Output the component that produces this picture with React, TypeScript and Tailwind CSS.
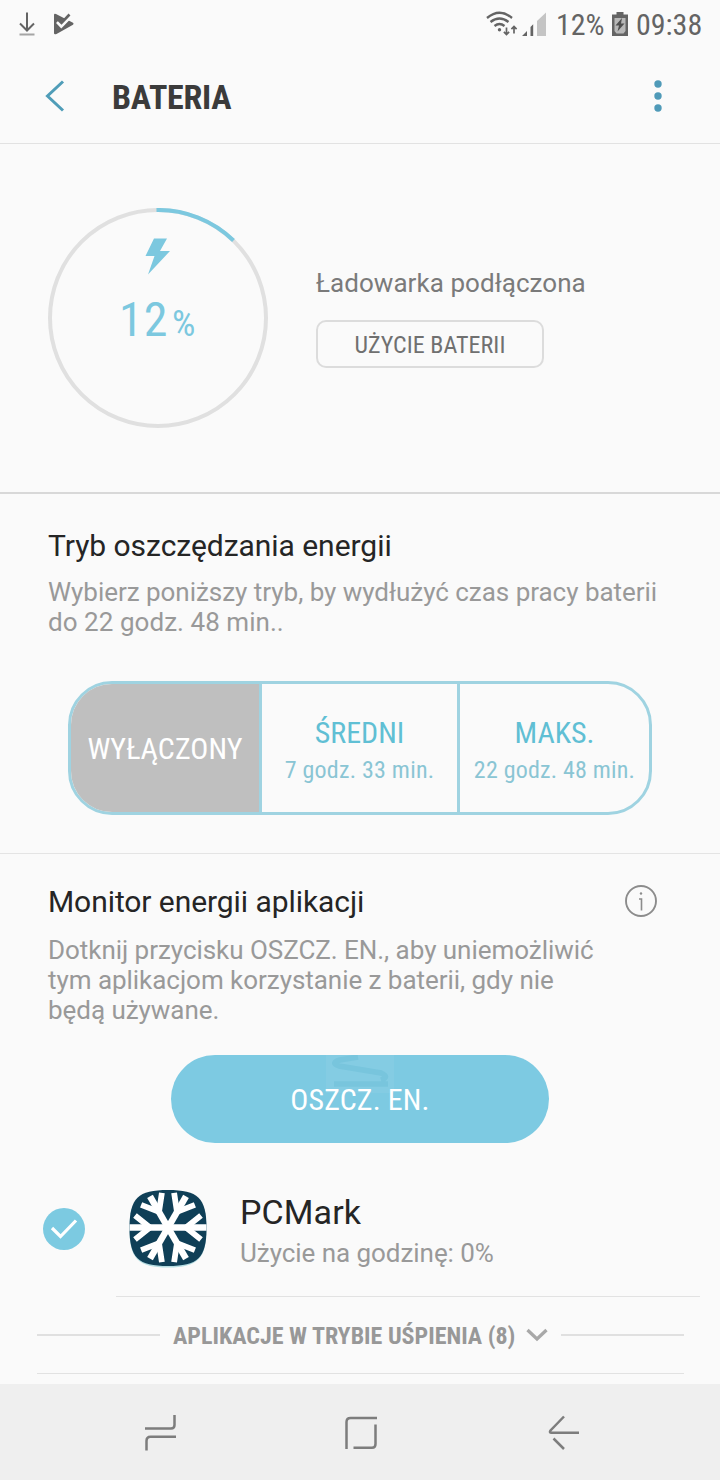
import React from "react";

const COND = "font-['Roboto_Condensed','Roboto',sans-serif] [font-stretch:75%] whitespace-nowrap";

function StatusBar() {
  return (
    <div className="flex h-12 items-center pl-[18px] pr-[17px] text-[#646464]">
      <svg width="18" height="26" viewBox="0 0 18 26" fill="none" stroke="#646464" strokeWidth="2">
        <path d="M9 1.500v18M2 12.500l7 7 7-7" />
        <path d="M1.500 23.500h15" stroke="#a5a5a5" strokeWidth="2" />
      </svg>
      <svg className="ml-[17px]" width="22" height="24" viewBox="0 0 22 24">
        <path d="M1 3Q1 1 3 2l17 8.800q1.200 1 0 2L3.500 22Q1 23 1 21z" fill="#646464" />
        <path d="M4.500 9.500l3.800 4L18 3.500" fill="none" stroke="#fafafa" strokeWidth="4" />
        <path d="M5.300 7.800l3.200 3.200L16.500 2.500" fill="none" stroke="#646464" strokeWidth="2.600" />
      </svg>
      <div className="ml-auto flex items-center">
        <svg width="62" height="30" viewBox="0 0 62 30" fill="none" stroke="#646464">
          <path d="M1 9Q13.500-1.500 26 9M4.500 13q9-7 18 0M8.500 17q5-4 10 0" strokeWidth="2.300" />
          <circle cx="13.500" cy="20.800" r="1.700" fill="#646464" stroke="none" />
          <path d="M20.500 18.500v7M17.900 22.800l2.600 2.700 2.600-2.700M28 24.500v-7M25.400 20.200l2.600-2.700 2.600 2.700" strokeWidth="1.700" />
          <path d="M36 27l5-5v5z M44.500 27V18l2.700-2.700V27z" fill="#646464" stroke="none" />
          <path d="M51 27V12l9-8.500V27z" fill="#c4c4c4" stroke="none" />
        </svg>
        <span className={`${COND} ml-2 mt-px w-[47px] text-[30px] leading-[30px]`}>12%</span>
        <svg className="ml-[9px]" width="16" height="24" viewBox="0 0 16 24">
          <path d="M0 2.500h4.500V0h7v2.500H16V24H0z" fill="#646464" />
          <path d="M2.500 6h11v13l-2 2.500h-7l-2-2.500z" fill="#b8b8b8" />
          <path d="M10 6L3.500 13.500h3.500L5.500 19.500 12.500 11.500H9z" fill="#4f4f4f" />
        </svg>
        <span className={`${COND} ml-[8px] mt-px w-[67px] text-[30px] leading-[30px]`}>09:38</span>
      </div>
    </div>
  );
}

function Header() {
  return (
    <header className="flex h-24 items-center border-b border-[#e2e2e2] pl-[45px] pr-[53px]">
      <svg width="20" height="32" viewBox="0 0 20 32" fill="none" stroke="#4f9db8" strokeWidth="3">
        <path d="M18 1.500L2.500 16 18 30.500" />
      </svg>
      <h1 className={`${COND} ml-[47px] mt-[2px] text-[34px] font-bold leading-[40px] tracking-[-0.25px] text-[#3b3b3b]`}>BATERIA</h1>
      <svg className="ml-auto" width="18" height="32" viewBox="0 0 18 32" fill="#4f9ab8">
        <circle cx="9" cy="4" r="3.700" />
        <circle cx="9" cy="16" r="3.700" />
        <circle cx="9" cy="28" r="3.700" />
      </svg>
    </header>
  );
}

function ChargeState() {
  return (
    <section className="flex h-[350px] items-start border-b-2 border-[#d8d8d8] pl-12 pt-16">
      <div className="grid h-[220px] w-[220px]">
        <svg className="col-start-1 row-start-1" width="220" height="220" viewBox="0 0 220 220" fill="none">
          <circle cx="110" cy="110" r="108" stroke="#e0e0e0" strokeWidth="4" />
          <path d="M108.500 2A108 108 0 0 1 185.500 32.500" stroke="#7cc8df" strokeWidth="4" />
          <path d="M106 30.500H119L112 43H122L100 66.500l6.500-18.500H97.500z" fill="#7cc8df" />
        </svg>
        <div className="col-start-1 row-start-1 flex items-baseline pl-[71px] pt-[84px] text-[#7cc8df]">
          <span className={`${COND} w-[53px] text-[48px] leading-[56px] tracking-[1px]`}>12</span>
          <span className={`${COND} text-[37px] leading-[40px]`}>%</span>
        </div>
      </div>
      <div className="ml-12 pt-[59px]">
        <p className="font-[Roboto] text-[26px] leading-8 tracking-[0.05px] text-[#7a7a7a]">Ładowarka podłączona</p>
        <button className="mt-[21px] flex h-12 w-[228px] items-center justify-center rounded-[10px] border-2 border-[#dcdcdc]">
          <span className={`${COND} mt-[2px] text-[24px] leading-7 tracking-[0.08px] text-[#707070]`}>UŻYCIE BATERII</span>
        </button>
      </div>
    </section>
  );
}

function PowerModes() {
  return (
    <section className="h-[360px] border-b border-[#e4e4e4] pt-8">
      <h2 className="pl-12 font-[Roboto] text-[30px] leading-10 tracking-[-0.04px] text-[#252525]">Tryb oszczędzania energii</h2>
      <p className="mt-[11px] whitespace-nowrap pl-12 font-[Roboto] text-[26px] leading-[30px] tracking-[-0.03px] text-[#999999]">
        Wybierz poniższy tryb, by wydłużyć czas pracy baterii
        <br />
        <span className="tracking-[0.05px]">do 22 godz. 48 min..</span>
      </p>
      <div className="ml-[68px] mt-11 flex h-[134px] w-[584px] overflow-hidden rounded-[44px] border-[3px] border-[#9fd3e1]">
        <div className="flex w-[188px] items-center justify-center bg-[#bfbfbf]">
          <span className={`${COND} mt-[2px] text-[30px] leading-9 tracking-[0.1px] text-white`}>WYŁĄCZONY</span>
        </div>
        <div className="flex w-[198px] flex-col items-center border-l-[3px] border-[#9fd3e1] pt-[31px]">
          <span className={`${COND} text-[30px] leading-9 text-[#60bfd4]`}>ŚREDNI</span>
          <span className={`${COND} mt-[5px] text-[24px] leading-7 tracking-[0.22px] text-[#8ac5d4]`}>7 godz. 33 min.</span>
        </div>
        <div className="flex flex-1 flex-col items-center border-l-[3px] border-[#9fd3e1] pt-[31px]">
          <span className={`${COND} text-[30px] leading-9 text-[#60bfd4]`}>MAKS.</span>
          <span className={`${COND} mt-[5px] text-[24px] leading-7 tracking-[0.2px] text-[#8ac5d4]`}>22 godz. 48 min.</span>
        </div>
      </div>
    </section>
  );
}

function SnowflakeIcon() {
  return (
    <svg width="80" height="80" viewBox="0 0 80 80">
      <defs>
        <clipPath id="tile">
          <path d="M40 2C70 2 78.500 10 78.500 40S70 78 40 78 1.500 70 1.500 40 10 2 40 2z" />
        </clipPath>
      </defs>
      <path d="M40 4C70 4 78.500 12 78.500 41S70 79.500 40 79.500 1.500 71 1.500 41 10 4 40 4z" fill="#b5dde2" />
      <g clipPath="url(#tile)">
        <rect width="80" height="80" fill="#0f3f57" />
        <g stroke="#ffffff" fill="none">
          {[0, 60, 120, 180, 240, 300].map((angle) => (
            <g key={angle} transform={`rotate(${angle} 40 39.500)`}>
              <path d={angle % 180 === 0 ? "M40 39.500H80" : "M40 39.500H76"} strokeWidth="6.500" />
              <path d="M58 39.500L73 27.500M58 39.500L73 51.500" strokeWidth="5.800" />
            </g>
          ))}
        </g>
      </g>
    </svg>
  );
}

function AppMonitor() {
  return (
    <section className="pt-7">
      <div className="flex items-center pl-12 pr-[62px]">
        <h2 className="font-[Roboto] text-[30px] leading-10 tracking-[-0.07px] text-[#252525]">Monitor energii aplikacji</h2>
        <svg className="ml-auto" width="34" height="34" viewBox="0 0 34 34" fill="none" stroke="#8c8c8c" strokeWidth="1.900">
          <circle cx="17" cy="16" r="15" />
          <path d="M15 14h2.500v11.500" strokeWidth="1.600" />
          <circle cx="17" cy="8.500" r="1.200" fill="#8c8c8c" stroke="none" />
        </svg>
      </div>
      <p className="mt-[13px] whitespace-nowrap pl-12 font-[Roboto] text-[26px] leading-[30px] tracking-[-0.04px] text-[#999999]">
        Dotknij przycisku OSZCZ. EN., aby uniemożliwić
        <br />
        tym aplikacjom korzystanie z baterii, gdy nie
        <br />
        będą używane.
      </p>
      <button className="mx-auto mt-[30px] grid h-[88px] w-[378px] place-items-center overflow-hidden rounded-full bg-[#7dcae2]">
        <svg className="col-start-1 row-start-1 self-start" width="68" height="40" viewBox="0 0 68 40" fill="none">
          <path d="M0 0h68v38H0z" fill="#84cce3" />
          <path d="M32 2L14 5q-10 3-1 6l42 7q9 4 0 7M8 29h54" stroke="#78c5dd" strokeWidth="5.500" />
        </svg>
        <span className={`${COND} col-start-1 row-start-1 mt-[2px] text-[30px] leading-9 tracking-[0.15px] text-white`}>OSZCZ. EN.</span>
      </button>
      <div className="flex h-[153px] items-start pl-[43px] pt-[45px]">
        <svg className="mt-5" width="42" height="42" viewBox="0 0 42 42">
          <circle cx="21" cy="21" r="21" fill="#7ccae1" />
          <path d="M9 20L17.500 28.500 33 12.500" fill="none" stroke="#ffffff" strokeWidth="3.200" />
        </svg>
        <div className="ml-[43px]">
          <SnowflakeIcon />
        </div>
        <div className="ml-8 pt-1">
          <h3 className="font-[Roboto] text-[34px] leading-10 tracking-[0.1px] text-[#252525]">PCMark</h3>
          <p className="mt-[5px] font-[Roboto] text-[26px] leading-8 tracking-[-0.05px] text-[#999999]">Użycie na godzinę: 0%</p>
        </div>
      </div>
      <div className="ml-[116px] mr-5 h-px bg-[#e2e2e2]" />
      <div className="ml-[37px] mr-9 flex h-[77px] items-center border-b border-[#e2e2e2]">
        <div className="h-0.5 w-[123px] bg-[#e0e0e0]" />
        <span className={`${COND} ml-[13px] mt-[2px] w-[343px] text-[24px] font-bold leading-8 text-[#989898]`}>
          APLIKACJE W TRYBIE UŚPIENIA (8)
        </span>
        <svg className="ml-[10px]" width="22" height="14" viewBox="0 0 22 14" fill="none" stroke="#a8a8a8" strokeWidth="3.300">
          <path d="M1.500 2L11 11l9.500-9" />
        </svg>
        <div className="ml-[13px] h-0.5 flex-1 bg-[#e0e0e0]" />
      </div>
    </section>
  );
}

function NavBar() {
  return (
    <nav className="mt-auto flex h-24 items-center bg-[#efefef] pl-[143px]">
      <svg width="34" height="38" viewBox="0 0 34 38" fill="none" stroke="#7d7d7d" strokeWidth="2.500">
        <path d="M31.500 2v10q0 3.500-3.500 3.500H2M3.500 37.500V28q0-4.300 4-4.300H33" />
      </svg>
      <svg className="ml-[167px]" width="34" height="38" viewBox="0 0 34 38" fill="none" stroke="#7d7d7d" strokeWidth="2.500">
        <path d="M2.500 36V9q0-4 4-4H33M31.500 11.500V31q0 3.800-3.500 3.800H9.500" />
      </svg>
      <svg className="ml-[168px]" width="34" height="38" viewBox="0 0 34 38" fill="none" stroke="#7d7d7d" strokeWidth="2.500">
        <path d="M18 3.500L4.500 17.500q-1.500 2.200 1 2.200H33M7.500 25.500L18 36" />
      </svg>
    </nav>
  );
}

export default function App() {
  return (
    <main className="flex h-[1480px] w-[720px] flex-col overflow-hidden bg-[#fafafa]">
      <StatusBar />
      <Header />
      <ChargeState />
      <PowerModes />
      <AppMonitor />
      <NavBar />
    </main>
  );
}
